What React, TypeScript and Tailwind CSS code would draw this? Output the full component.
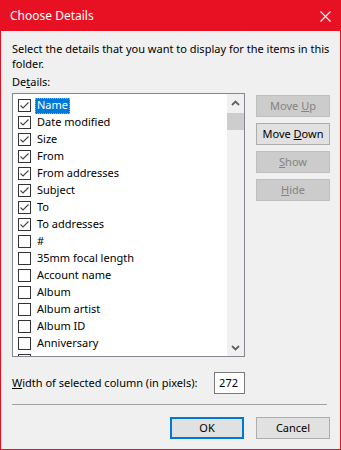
import React from "react";

const ITEMS: [string, boolean][] = [
  ["Name", true],
  ["Date modified", true],
  ["Size", true],
  ["From", true],
  ["From addresses", true],
  ["Subject", true],
  ["To", true],
  ["To addresses", true],
  ["#", false],
  ["35mm focal length", false],
  ["Account name", false],
  ["Album", false],
  ["Album artist", false],
  ["Album ID", false],
  ["Anniversary", false],
  ["Artist", false],
];

function CheckBox({ checked }: { checked: boolean }) {
  return (
    <div className="w-[13px] h-[13px] shrink-0 border border-[#333333] bg-white">
      {checked && (
        <svg width="11" height="11" viewBox="0 0 11 11" className="block">
          <path d="M1.5 5.5 L4 8 L9.5 2.5" fill="none" stroke="#444444" strokeWidth="1.1" />
        </svg>
      )}
    </div>
  );
}

function SideButton({ children, disabled }: { children: React.ReactNode; disabled?: boolean }) {
  return (
    <div
      className={
        disabled
          ? "h-[22px] w-[74px] flex items-center justify-center border border-[#bfbfbf] bg-[#cccccc] text-[#838383]"
          : "h-[22px] w-[74px] flex items-center justify-center border border-[#adadad] bg-[#e1e1e1] text-black"
      }
    >
      <span>{children}</span>
    </div>
  );
}

function Chevron({ up }: { up?: boolean }) {
  return (
    <svg width="9" height="6" viewBox="0 0 9 6">
      <path
        d={up ? "M1 5 L4.5 1.5 L8 5" : "M1 1 L4.5 4.5 L8 1"}
        fill="none"
        stroke="#5a6464"
        strokeWidth="1.8"
      />
    </svg>
  );
}

export default function App() {
  return (
    <div className="w-[341px] h-[450px] border border-[#e81123] bg-[#f0f0f0] flex flex-col font-['Noto_Sans',sans-serif] text-[11px] text-black whitespace-nowrap">
      {/* title bar */}
      <div className="h-[30px] shrink-0 bg-[#e81123] flex items-center justify-between pl-[9px] pr-[9px] text-white">
        <span className="text-[12px]">Choose Details</span>
        <svg width="11" height="11" viewBox="0 0 11 11">
          <path d="M0.5 0.5 L10.5 10.5 M10.5 0.5 L0.5 10.5" stroke="#ffffff" strokeWidth="1.1" />
        </svg>
      </div>

      <div className="flex flex-col pl-[11px] pr-[10px]">
        <p className="mt-[10px] leading-[15px]">
          Select the details that you want to display for the items in this
          <br />
          folder.
        </p>
        <div className="mt-[3px] leading-[15px]">
          De<u>t</u>ails:
        </div>

        <div className="mt-[4px] flex">
          {/* list box */}
          <div className="w-[233px] h-[264px] shrink-0 border border-[#828790] bg-white flex overflow-hidden">
            <div className="flex-1 flex flex-col pt-[3px] pl-[5px] overflow-hidden">
              {ITEMS.map(([label, checked], i) => (
                <div key={label} className="h-[17px] shrink-0 flex items-center gap-[4px]">
                  <CheckBox checked={checked} />
                  <span
                    className={
                      i === 0
                        ? "h-[16px] px-[1px] flex items-center bg-[#0078d7] text-white border border-dotted border-[#e8a040]"
                        : "h-[16px] px-[2px] flex items-center"
                    }
                  >
                    {label}
                  </span>
                </div>
              ))}
            </div>
            {/* scrollbar */}
            <div className="w-[17px] bg-[#f0f0f0] flex flex-col">
              <div className="h-[17px] flex items-center justify-center">
                <Chevron up />
              </div>
              <div className="mt-[2px] h-[17px] bg-[#cdcdcd]" />
              <div className="flex-1" />
              <div className="h-[17px] flex items-center justify-center">
                <Chevron />
              </div>
            </div>
          </div>

          {/* side buttons */}
          <div className="ml-[11px] pt-[2px] flex flex-col gap-[6px]">
            <SideButton disabled>
              Move <u>U</u>p
            </SideButton>
            <SideButton>
              Move <u>D</u>own
            </SideButton>
            <SideButton disabled>
              <u>S</u>how
            </SideButton>
            <SideButton disabled>
              <u>H</u>ide
            </SideButton>
          </div>
        </div>

        {/* column width */}
        <div className="mt-[15px] w-[233px] flex items-center justify-between">
          <span>
            <u>W</u>idth of selected column (in pixels):
          </span>
          <div className="w-[31px] h-[22px] border border-[#7a7a7a] bg-white flex items-center justify-end pr-[6px]">
            272
          </div>
        </div>

        <div className="mt-[10px] w-[315px] h-px bg-[#a0a0a0]" />

        <div className="mt-[12px] flex justify-end gap-[12px]">
          <div className="w-[74px] h-[22px] border-2 border-[#0078d7] bg-[#e1e1e1] flex items-center justify-center">
            OK
          </div>
          <div className="w-[74px] h-[22px] border border-[#adadad] bg-[#e1e1e1] flex items-center justify-center">
            Cancel
          </div>
        </div>
      </div>
    </div>
  );
}
